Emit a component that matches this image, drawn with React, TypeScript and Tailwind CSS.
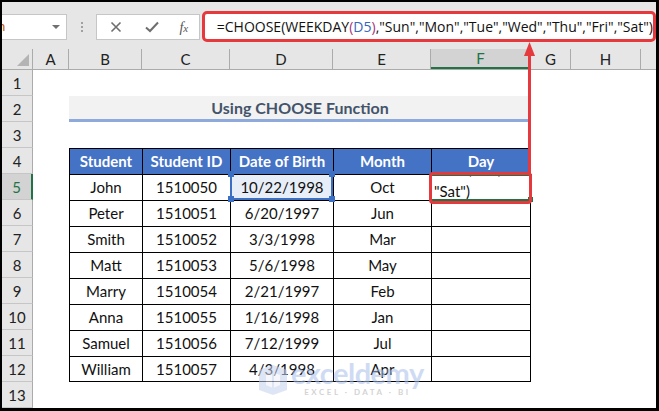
import React from "react"

const letters = ["A", "B", "C", "D", "E", "F", "G", "H"]
const colW = ["w-[36px]", "w-[73px]", "w-[88px]", "w-[103px]", "w-[98px]", "w-[100px]", "w-[40px]", "w-[70px]"]

const students = [
  ["John", "1510050", "10/22/1998", "Oct"],
  ["Peter", "1510051", "6/20/1997", "Jun"],
  ["Smith", "1510052", "3/3/1998", "Mar"],
  ["Matt", "1510053", "5/6/1998", "May"],
  ["Marry", "1510054", "2/21/1997", "Feb"],
  ["Anna", "1510055", "1/16/1998", "Jan"],
  ["Samuel", "1510056", "7/12/1999", "Jul"],
  ["William", "1510057", "4/3/1998", "Apr"],
]

const font = { fontFamily: "Lato, 'Open Sans', sans-serif" }

const RowHead = ({ n, active }: { n: number; active?: boolean }) => (
  <div
    className={
      active
        ? "w-[31px] shrink-0 flex items-end justify-center pb-[1px] text-[15px] bg-[#d3d3d3] text-[#217346] border-b border-b-[#c6c6c6] border-r-2 border-r-[#217346]"
        : "w-[31px] shrink-0 flex items-end justify-center pb-[1px] text-[15px] bg-[#e6e6e6] text-[#222] border-b border-b-[#c6c6c6] border-r border-r-[#ababab]"
    }
  >
    {n}
  </div>
)

const Row = ({ n, active, children }: { n: number; active?: boolean; children?: React.ReactNode }) => (
  <div className="flex h-[26px] shrink-0">
    <RowHead n={n} active={active} />
    <div className="w-[36px] shrink-0" />
    {children}
  </div>
)

const cellBase = "shrink-0 flex items-center justify-center border-l border-t border-black text-[15px] text-[#111]"

export default function App() {
  return (
    <div className="w-[659px] h-[411px] bg-black pt-[2px] pl-[2px] pr-[3px] pb-[3px]" style={font}>
      <div className="relative w-full h-full bg-white flex flex-col overflow-hidden">
        {/* toolbar */}
        <div className="h-[47px] shrink-0 bg-[#e6e6e6] flex pt-[12px]">
          <div className="w-[69px] h-[26px] bg-white border border-l-0 border-[#c6c6c6] flex items-center justify-between pr-[6px] overflow-hidden">
            <span className="text-[13px] text-[#c55a11] -ml-[4px]">n</span>
            <span className="w-0 h-0 border-l-[4px] border-r-[4px] border-t-[4px] border-l-transparent border-r-transparent border-t-[#707070]" />
          </div>
          <div className="w-[31px] flex flex-col items-center justify-center gap-[2px] h-[26px]">
            <span className="w-[2px] h-[2px] bg-[#a0a0a0]" />
            <span className="w-[2px] h-[2px] bg-[#a0a0a0]" />
            <span className="w-[2px] h-[2px] bg-[#a0a0a0]" />
          </div>
          <div className="w-[109px] h-[26px] bg-white border border-[#c6c6c6] flex items-center pl-[13px]">
            <svg width="12" height="12" viewBox="0 0 12 12" className="shrink-0">
              <path d="M1.5 1.5 L10.5 10.5 M10.5 1.5 L1.5 10.5" stroke="#6e6e6e" strokeWidth="1.6" />
            </svg>
            <svg width="14" height="12" viewBox="0 0 14 12" className="ml-[23px] shrink-0">
              <path d="M1 6.5 L5 10 L13 1.5" stroke="#6e6e6e" strokeWidth="2" fill="none" />
            </svg>
            <span className="ml-[20px] text-[14px] italic text-[#555]" style={{ fontFamily: "'Liberation Serif', serif" }}>
              f<span className="text-[11px]">x</span>
            </span>
          </div>
          <div className="w-[2px]" />
          <div className="flex-1 h-[31px] -mt-[3px] border-[3px] border-[#e5393e] rounded-[5px] bg-white flex items-center pl-[12px] text-[14px] text-[#111] whitespace-nowrap" style={{ fontFamily: "'Open Sans', sans-serif" }}>
            =CHOOSE(WEEKDAY<span className="text-[#a8337a]">(</span>
            <span className="text-[#3566c0]">D5</span>
            <span className="text-[#a8337a]">)</span>,"Sun","Mon","Tue","Wed","Thu","Fri","Sat")
          </div>
        </div>

        {/* column headers */}
        <div className="flex h-[21px] shrink-0 bg-[#e6e6e6] border-b border-[#ababab]">
          <div className="w-[31px] shrink-0 border-r border-[#ababab] relative">
            <svg width="12" height="12" viewBox="0 0 12 12" className="absolute right-[3px] bottom-[3px]">
              <path d="M12 0 L12 12 L0 12 Z" fill="#b4b4b4" />
            </svg>
          </div>
          {letters.map((l, i) =>
            l === "F" ? (
              <div key={l} className={`${colW[i]} shrink-0 flex items-center justify-center text-[15px] bg-[#d3d3d3] text-[#217346] border-b-2 border-b-[#217346] border-r border-r-[#ababab]`}>
                {l}
              </div>
            ) : (
              <div key={l} className={`${colW[i]} shrink-0 flex items-center justify-center text-[15px] text-[#222] border-r border-[#ababab]`}>
                {l}
              </div>
            )
          )}
          <div className="flex-1" />
        </div>

        <Row n={1} />
        <Row n={2}>
          <div className="w-[462px] shrink-0 bg-[#f2f2f2] border-b-[3px] border-[#8eaadb] flex items-center justify-center font-bold text-[16px] text-[#44546a]">
            Using CHOOSE Function
          </div>
        </Row>
        <Row n={3} />
        <Row n={4}>
          {["Student", "Student ID", "Date of Birth", "Month", "Day"].map((h, i) => (
            <div
              key={h}
              className={`${colW[i + 1]} ${cellBase} bg-[#4472c4] font-bold text-white ${i === 4 ? "border-r" : ""}`}
            >
              {h}
            </div>
          ))}
        </Row>
        {students.map((s, idx) => (
          <Row key={s[0]} n={idx + 5} active={idx === 0}>
            {s.map((v, i) => (
              <div
                key={i}
                className={`${colW[i + 1]} ${cellBase} ${idx === 7 ? "border-b" : ""} ${idx === 0 && i === 2 ? "bg-[#e8eef8]" : ""}`}
              >
                {v}
              </div>
            ))}
            <div className={`${colW[5]} ${cellBase} border-r ${idx === 7 ? "border-b" : ""} relative overflow-hidden`}>
              {idx === 0 && (
                <div className="absolute left-[2px] bottom-[-2px] leading-[22px] text-[15px] text-[#111] whitespace-nowrap">
                  <div>"Thu","Fri",</div>
                  <div>"Sat")</div>
                </div>
              )}
            </div>
          </Row>
        ))}
        <Row n={13} />

        {/* D5 range highlight */}
        <div className="absolute left-[228px] top-[172px] w-[103px] h-[26px] border-2 border-[#3b6fc4] border-t-0">
          <span className="absolute -left-[4px] -top-[3px] w-[6px] h-[6px] bg-[#3b6fc4]" />
          <span className="absolute -right-[4px] -top-[3px] w-[6px] h-[6px] bg-[#3b6fc4]" />
          <span className="absolute -left-[4px] -bottom-[4px] w-[6px] h-[6px] bg-[#3b6fc4]" />
          <span className="absolute -right-[4px] -bottom-[4px] w-[6px] h-[6px] bg-[#3b6fc4]" />
        </div>

        {/* F5 active cell */}
        <div className="absolute left-[428px] top-[172px] w-[102px] h-[27px] border-2 border-[#217346]">
          <span className="absolute -right-[3px] -bottom-[3px] w-[5px] h-[5px] bg-[#217346]" />
        </div>
        <div className="absolute left-[427px] top-[170px] w-[103px] h-[32px] border-[3px] border-[#e5393e] rounded-[4px]" />

        {/* arrow */}
        <svg className="absolute left-[520px] top-[40px]" width="16" height="133" viewBox="0 0 16 133">
          <path d="M7.5 10 L7.5 133" stroke="#e5393e" strokeWidth="3" />
          <path d="M7.5 0 L13 14 L2 14 Z" fill="#e5393e" />
        </svg>

        {/* watermark */}
        <div className="absolute left-[255px] top-[357px] flex items-start gap-[2px] opacity-55 pointer-events-none">
          <svg width="32" height="32" viewBox="0 0 32 32" className="mt-[5px]">
            <path d="M2 6 L16 1 L30 6 L30 26 L16 31 L2 26 Z" fill="#c4d2ee" />
            <path d="M9 11 L16 8 L23 11 L23 21 L16 24 L9 21 Z" fill="#eef2fa" />
            <path d="M16 8 L16 24" stroke="#c4d2ee" strokeWidth="2" />
          </svg>
          <div className="flex flex-col items-center leading-none">
            <span className="text-[29px] font-bold text-[#a9bfea] tracking-[-0.5px] leading-[28px]">exceldemy</span>
            <span className="text-[8px] tracking-[2.5px] text-[#b0b0b0] mt-[1px] font-bold">EXCEL · DATA · BI</span>
          </div>
        </div>
      </div>
    </div>
  )
}
